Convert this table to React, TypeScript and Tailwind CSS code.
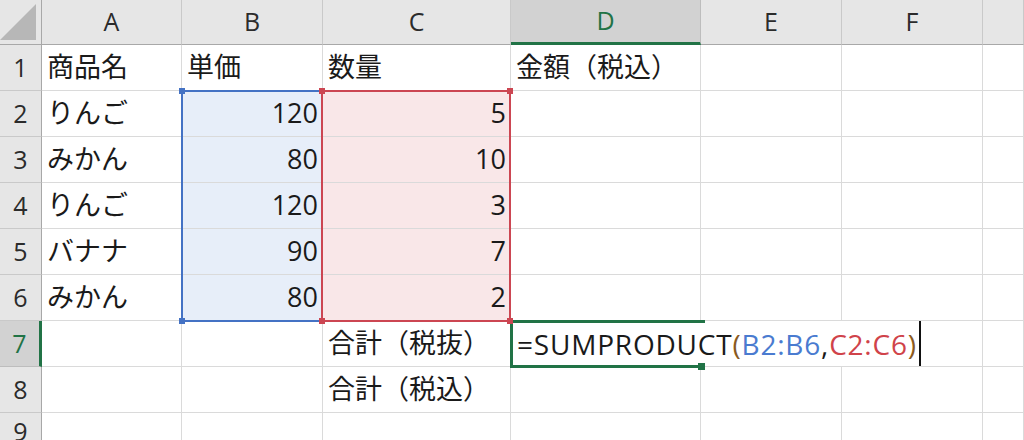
import React from 'react';

const FONT = { fontFamily: '"Open Sans", "Noto Sans CJK JP", sans-serif' };

const colHeaders = ['A', 'B', 'C', 'D', 'E', 'F', ''];

const items: [string, number, number][] = [
  ['りんご', 120, 5],
  ['みかん', 80, 10],
  ['りんご', 120, 3],
  ['バナナ', 90, 7],
  ['みかん', 80, 2],
];

const Cell: React.FC<{ className?: string; children?: React.ReactNode }> = ({ className = '', children }) => (
  <div className={`border-r border-b border-[#dadada] flex items-center overflow-visible whitespace-nowrap ${className}`}>
    {children}
  </div>
);

const RowHead: React.FC<{ n: number; active?: boolean }> = ({ n, active }) => (
  <div
    className={`flex items-center justify-center text-[25px] border-b ${
      active
        ? 'bg-[#d2d2d2] text-[#217346] border-[#bdbdbd] border-r-[3px] border-r-[#217346]'
        : 'bg-[#e6e6e6] text-[#2b2b2b] border-[#c9c9c9] border-r border-r-[#a8a8a8]'
    }`}
  >
    {n}
  </div>
);

const Handle: React.FC<{ className: string }> = ({ className }) => (
  <span className={`absolute w-[6px] h-[6px] ${className}`} />
);

export default function App() {
  return (
    <div className="w-[1024px] h-[440px] overflow-hidden bg-white text-[#1a1a1a]" style={FONT}>
      <div className="grid grid-cols-[42px_140px_141px_188px_190px_141px_141px_1fr] grid-rows-[45px_repeat(8,46px)_1fr] h-full">
        {/* header row */}
        <div className="bg-[#e6e6e6] border-r border-b border-r-[#a8a8a8] border-b-[#a8a8a8] flex items-end justify-end">
          <svg width="37" height="37" viewBox="0 0 37 37" className="mb-[3px] mr-[4px]">
            <polygon points="36,0 36,36 0,36" fill="#b7b7b7" />
          </svg>
        </div>
        {colHeaders.map((c) =>
          c === 'D' ? (
            <div
              key={c}
              className="bg-[#d2d2d2] text-[#217346] text-[25px] flex items-center justify-center border-r border-[#bdbdbd] border-b-[3px] border-b-[#217346]"
            >
              {c}
            </div>
          ) : (
            <div
              key={c || 'G'}
              className="bg-[#e6e6e6] text-[#2b2b2b] text-[25px] flex items-center justify-center border-r border-r-[#c9c9c9] border-b border-b-[#a8a8a8]"
            >
              {c}
            </div>
          )
        )}

        {/* row 1 */}
        <RowHead n={1} />
        <Cell className="text-[27px] pl-[5px]">商品名</Cell>
        <Cell className="text-[27px] pl-[5px]">単価</Cell>
        <Cell className="text-[27px] pl-[5px]">数量</Cell>
        <Cell className="text-[27px] pl-[5px]">金額（税込）</Cell>
        <Cell />
        <Cell />
        <Cell />

        {/* rows 2-6 */}
        {items.map(([name, price, qty], i) => (
          <React.Fragment key={i}>
            <RowHead n={i + 2} />
            <Cell className="text-[27px] pl-[5px]">{name}</Cell>
            <Cell className="relative text-[27px] justify-end pr-[4px] bg-[#e7eef9]">
              {price}
              {i === 0 && (
                <div className="absolute -left-px -top-px w-[142px] h-[232px] border-2 border-[#4472c4] z-10 pointer-events-none">
                  <Handle className="-left-[4px] -top-[4px] bg-[#4472c4]" />
                  <Handle className="-left-[4px] -bottom-[4px] bg-[#4472c4]" />
                </div>
              )}
            </Cell>
            <Cell className="relative text-[27px] justify-end pr-[4px] bg-[#f9e7e8]">
              {qty}
              {i === 0 && (
                <div className="absolute -left-[2px] -top-px w-[190px] h-[232px] border-2 border-[#cc4652] z-20 pointer-events-none">
                  <Handle className="-left-[4px] -top-[4px] bg-[#cc4652]" />
                  <Handle className="-right-[4px] -top-[4px] bg-[#cc4652]" />
                  <Handle className="-left-[4px] -bottom-[4px] bg-[#cc4652]" />
                  <Handle className="-right-[4px] -bottom-[4px] bg-[#cc4652]" />
                </div>
              )}
            </Cell>
            <Cell />
            <Cell />
            <Cell />
            <Cell />
          </React.Fragment>
        ))}

        {/* row 7 */}
        <RowHead n={7} active />
        <Cell />
        <Cell />
        <Cell className="text-[27px] pl-[5px]">合計（税抜）</Cell>
        <div className="col-span-3 border-r border-b border-[#dadada] relative flex items-center">
          <div className="absolute -left-px -top-px w-[192px] h-[48px] border-[3px] border-r-0 border-[#217346] z-10">
            <span className="absolute -right-[3px] -top-[3px] w-[3px] h-[3px] bg-[#217346]" />
            <span className="absolute -right-[3px] -bottom-[5px] w-[7px] h-[7px] bg-[#217346]" />
          </div>
          <span className="relative z-20 pl-[6px] text-[28px] tracking-[0.8px] whitespace-nowrap">
            =SUMPRODUCT<span className="text-[#8a5a1e]">(</span>
            <span className="text-[#4a7bd0]">B2:B6</span>,<span className="text-[#d0434a]">C2:C6</span>
            <span className="text-[#8a5a1e]">)</span>
          </span>
          <span className="relative z-20 ml-[2px] w-[2px] h-[45px] bg-[#111]" />
        </div>
        <Cell />

        {/* row 8 */}
        <RowHead n={8} />
        <Cell />
        <Cell />
        <Cell className="text-[27px] pl-[5px]">合計（税込）</Cell>
        <Cell />
        <Cell />
        <Cell />
        <Cell />

        {/* row 9 */}
        <RowHead n={9} />
        <Cell />
        <Cell />
        <Cell />
        <Cell />
        <Cell />
        <Cell />
        <Cell />
      </div>
    </div>
  );
}
